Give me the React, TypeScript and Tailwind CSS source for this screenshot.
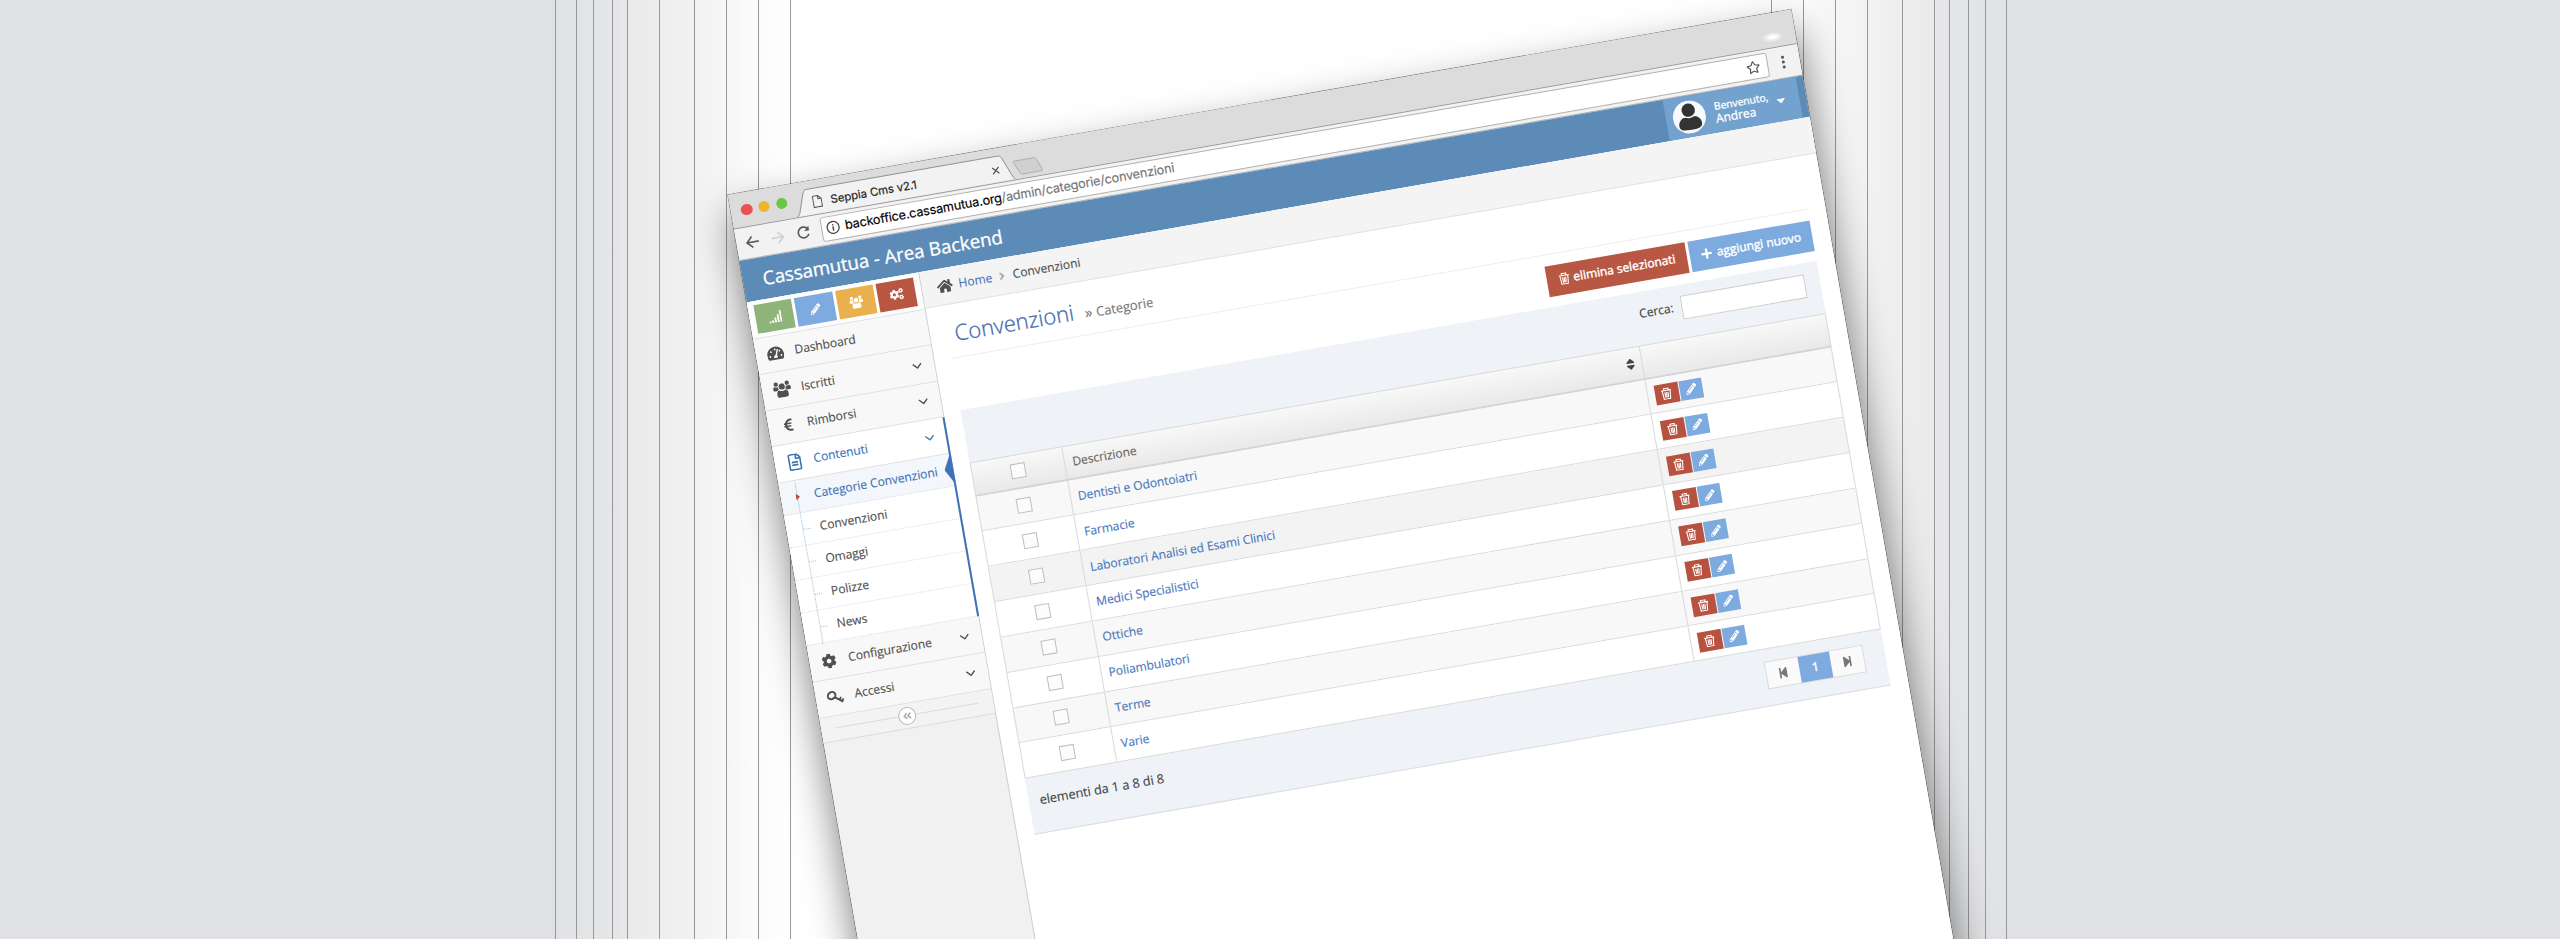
import React from 'react';
import {
  FaAngleDoubleLeft,
  FaAngleRight,
  FaCog,
  FaCogs,
  FaEuroSign,
  FaHome,
  FaPencilAlt,
  FaPlus,
  FaRegFileAlt,
  FaRegStar,
  FaSort,
  FaStepBackward,
  FaStepForward,
  FaTachometerAlt,
} from 'react-icons/fa';

const leftStripes = [
  'w-[21px] from-[#e0e2e5] to-[#e3e4e6]',
  'w-[17px] from-[#e1e3e5] to-[#e4e5e7]',
  'w-[19px] from-[#e2e4e6] to-[#e5e6e8]',
  'w-[15px] from-[#e4e5e7] to-[#e8e8ea]',
  'w-[32px] from-[#eaeaeb] to-[#eeeeee]',
  'w-[35px] from-[#eeeeee] to-[#f2f2f2]',
  'w-[32px] from-[#f2f2f2] to-[#f7f7f7]',
  'w-[32px] from-[#f6f6f6] to-[#fcfcfc]',
  'w-[32px] from-[#fbfbfb] to-[#ffffff]',
];

const rightStripes = [
  'w-[32px] from-[#ffffff] to-[#fbfbfb]',
  'w-[32px] from-[#fcfcfc] to-[#f6f6f6]',
  'w-[32px] from-[#f7f7f7] to-[#f2f2f2]',
  'w-[35px] from-[#f2f2f2] to-[#eeeeee]',
  'w-[32px] from-[#eeeeee] to-[#eaeaeb]',
  'w-[15px] from-[#e8e8ea] to-[#e4e5e7]',
  'w-[19px] from-[#e5e6e8] to-[#e2e4e6]',
  'w-[17px] from-[#e4e5e7] to-[#e1e3e5]',
  'w-[21px] from-[#e3e4e6] to-[#e0e2e5]',
];

const categories = [
  'Dentisti e Odontoiatri',
  'Farmacie',
  'Laboratori Analisi ed Esami Clinici',
  'Medici Specialistici',
  'Ottiche',
  'Poliambulatori',
  'Terme',
  'Varie',
];

const submenu = ['Categorie Convenzioni', 'Convenzioni', 'Omaggi', 'Polizze', 'News'];

interface IconProps {
  className: string;
}

const GroupIcon = ({ className }: IconProps) => (
  <svg className={className} viewBox="0 0 19 18" fill="currentColor">
    <circle cx="3.600" cy="3.200" r="2.300" />
    <circle cx="15.400" cy="3.200" r="2.300" />
    <circle cx="9.500" cy="6.200" r="3.300" />
    <path d="M0 8.500C0 6.500.8 5.600 2 5.600C3 6.300 4.200 6.300 5.200 5.900C5.200 7.500 5.600 8.500 6.300 9.200C5.200 9.300 4.500 9.800 4 10.300H1.500C.5 10.300 0 9.800 0 8.500Z" />
    <path d="M19 8.500C19 6.500 18.200 5.600 17 5.600C16 6.300 14.800 6.300 13.800 5.900C13.800 7.500 13.400 8.500 12.700 9.200C13.800 9.300 14.500 9.800 15 10.300H17.500C18.500 10.300 19 9.800 19 8.500Z" />
    <path d="M3.400 15.200C3.400 12 4.200 10 6.300 10C8.200 11.400 10.800 11.400 12.700 10C14.800 10 15.600 12 15.600 15.200C15.600 17 14.700 17.600 13.400 17.600H5.600C4.300 17.600 3.400 17 3.400 15.200Z" />
  </svg>
);

const KeyIcon = ({ className }: IconProps) => (
  <svg className={className} viewBox="0 0 17 14" fill="none" stroke="currentColor">
    <ellipse cx="5" cy="5" rx="4" ry="3.400" transform="rotate(-25 5 5)" strokeWidth="2" />
    <path d="M7.600 7 15.500 12.800" strokeWidth="2" />
    <path d="M12.300 10.300 14 7.900M14.600 12 16.300 9.700" strokeWidth="1.700" />
  </svg>
);

const TrashIcon = ({ className }: IconProps) => (
  <svg className={className} viewBox="0 0 11 12" fill="none" stroke="currentColor" strokeWidth="1.100">
    <path d="M.4 2.800H10.600M3.300 2.600V.7H7.700V2.600M1.500 3 2.300 11.400H8.700L9.500 3M3.900 4.600 4.200 9.900M5.500 4.600V9.900M7.100 4.600 6.800 9.900" />
  </svg>
);

const SignalIcon = ({ className }: IconProps) => (
  <svg className={className} viewBox="0 0 13 12" fill="currentColor">
    <path d="M0 10H1.800V12H0ZM2.800 9.200H4.600V12H2.800ZM5.600 7H7.400V12H5.600ZM8.400 4H10.200V12H8.400ZM11.200 0H13V12H11.200Z" />
  </svg>
);

const Chevron = ({ className }: IconProps) => (
  <svg className={className} viewBox="0 0 10 6" fill="none" stroke="currentColor" strokeWidth="1.400">
    <path d="M.8.8 5 5 9.200.8" />
  </svg>
);

const Backdrop = () => (
  <div className="flex h-full w-full">
    <div className="w-[555px] bg-[#dfe1e4]" />
    {leftStripes.map((stripe, index) => (
      <div key={index} className={`border-l border-[#98989a] bg-linear-to-r ${stripe}`} />
    ))}
    <div className="w-[981px] border-l border-[#98989a] bg-white" />
    {rightStripes.map((stripe, index) => (
      <div key={index} className={`border-l border-[#98989a] bg-linear-to-r ${stripe}`} />
    ))}
    <div className="flex-1 border-l border-[#98989a] bg-[#dfe1e4]" />
  </div>
);

const BrowserChrome = () => (
  <div className="font-['Inter',sans-serif]">
    <div className="flex h-[33.5px] bg-[#dcdcdc] pl-[10px]">
      <div className="flex gap-[6.3px] pt-[11.5px]">
        <span className="h-[11.6px] w-[11.6px] rounded-full bg-[#e8544d]" />
        <span className="h-[11.6px] w-[11.6px] rounded-full bg-[#efb42f]" />
        <span className="h-[11.6px] w-[11.6px] rounded-full bg-[#69c843]" />
      </div>
      <div className="relative ml-[7px] h-[34px] w-[222px]">
        <svg className="absolute inset-0 h-[34px] w-[222px]" viewBox="0 0 222 34">
          <path d="M0 33.8 C3 33 3.500 31 4.500 28 L10 11.500 C11 9 12 8 14 8 H208 C210 8 211 9 212 11 L219 29 C220 32 221 33 222 33.8" fill="#f2f2f2" stroke="#8e8e8e" strokeWidth="0.9" />
        </svg>
        <div className="relative flex h-full items-center pl-[18px] pt-[9px]">
          <svg className="h-[13px] w-[10px]" viewBox="0 0 10 13" fill="none" stroke="#555" strokeWidth="1">
            <path d="M.8.8H6L9.200 4V12.200H.8Z M6 .8V4H9.200" />
          </svg>
          <span className="ml-[8px] text-[11.300px] leading-4 text-[#222] [-webkit-text-stroke:0.2px]">Seppia Cms v2.1</span>
          <svg className="ml-auto mr-[14px] h-[8px] w-[8px]" viewBox="0 0 8 8" stroke="#555" strokeWidth="1.3">
            <path d="M.8.8 7.200 7.200M7.200.8.8 7.200" />
          </svg>
        </div>
      </div>
      <svg className="ml-[-1px] mt-[14.5px] h-[16px] w-[30px]" viewBox="0 0 30 16">
        <path d="M3 .8H22C24 .8 24.500 1.500 25 3L29 13C29.400 14.500 29 15 27.500 15H9C7.500 15 7 14.500 6.400 13L2 3C1.400 1.500 1.500.8 3 .8Z" fill="#d0d0d0" stroke="#ababab" strokeWidth="0.9" />
      </svg>
      <div className="ml-auto mr-[10px] mt-[18px] h-[12px] w-[26px] bg-radial from-white from-10% to-transparent to-60%" />
    </div>
    <div className="flex h-[33.5px] items-center border-t border-b border-t-[#999] border-b-[#b5b5b5] bg-[#f2f2f2]">
      <svg className="ml-[9px] h-[13px] w-[14px]" viewBox="0 0 14 13" fill="none" stroke="#5a5a5a" strokeWidth="1.6">
        <path d="M13.500 6.500H1.500M7 1 1.500 6.500 7 12" />
      </svg>
      <svg className="ml-[12px] h-[13px] w-[14px]" viewBox="0 0 14 13" fill="none" stroke="#d0d0d0" strokeWidth="1.6">
        <path d="M.5 6.500H12.500M7 1 12.500 6.500 7 12" />
      </svg>
      <svg className="ml-[12px] h-[14px] w-[14px]" viewBox="0 0 14 14" fill="none" stroke="#5a5a5a" strokeWidth="1.7">
        <path d="M12 9.200A5.400 5.400 0 1 1 11 3.200" />
        <path d="M12.800.8V5.700H7.900Z" fill="#5a5a5a" stroke="none" />
      </svg>
      <div className="ml-[11px] flex h-[25px] w-[961px] items-center rounded-[3px] border border-[#b0b0b0] bg-white pl-[4px]">
        <svg className="h-[14px] w-[14px]" viewBox="0 0 14 14" fill="none" stroke="#4a4a4a">
          <circle cx="7" cy="7" r="6" strokeWidth="1.3" />
          <path d="M7 6V10.300M7 3.600V5" strokeWidth="1.5" />
        </svg>
        <span className="ml-[5px] text-[12.700px] leading-4 tracking-[-0.15px] text-[#767676] [-webkit-text-stroke:0.15px]">
          <span className="text-black">backoffice.cassamutua.org</span>/admin/categorie/convenzioni
        </span>
        <FaRegStar className="ml-auto mr-[7px] h-[13px] w-[14px] text-[#555]" />
      </div>
      <div className="ml-[14px] flex flex-col gap-[2.500px]">
        <span className="h-[2.500px] w-[2.500px] rounded-full bg-[#555]" />
        <span className="h-[2.500px] w-[2.500px] rounded-full bg-[#555]" />
        <span className="h-[2.500px] w-[2.500px] rounded-full bg-[#555]" />
      </div>
    </div>
  </div>
);

const Navbar = () => (
  <div className="flex h-[42px] items-center bg-[#5d8bb7] text-white">
    <h1 className="ml-[20px] text-[18.7px] leading-none [-webkit-text-stroke:0.3px]">Cassamutua - Area Backend</h1>
    <div className="ml-auto mr-[7.500px] flex h-full w-[135px] items-center bg-[#74a2cf] [-webkit-text-stroke:0.3px]">
      <svg className="ml-[7px] h-[33px] w-[33px]" viewBox="0 0 33 33">
        <circle cx="16.500" cy="16.500" r="16.500" fill="#f7fafc" />
        <path d="M10 16.500C7 18 4.800 21 5 24.500C5.300 28 8 29.500 16.500 29.500S27.700 28 28 24.500C28.200 21 26 18 23 16.500Z" fill="#333" />
        <circle cx="16.500" cy="9.800" r="7.800" fill="#f7fafc" />
        <circle cx="16.500" cy="9.500" r="6.700" fill="#333" />
      </svg>
      <div className="ml-[10px]">
        <div className="text-[10.300px] leading-[12px]">Benvenuto,</div>
        <div className="text-[12px] leading-[13px]">Andrea</div>
      </div>
      <svg className="ml-[7.500px] h-[5px] w-[9px]" viewBox="0 0 9 5">
        <path d="M0 0H9L4.500 5Z" fill="#fff" />
      </svg>
    </div>
  </div>
);

interface MenuItemProps {
  icon: React.ReactNode;
  label: string;
  arrow?: boolean;
  active?: boolean;
}

const MenuItem = ({ icon, label, arrow = true, active = false }: MenuItemProps) => (
  <div
    className={`flex h-[36.600px] items-center border-b border-[#dedede] ${
      active ? 'bg-white text-[#3b74b9]' : 'bg-[#f8f8f8] text-[#505050]'
    }`}
  >
    <span className="ml-[10px] flex w-[19px] justify-center">{icon}</span>
    <span className="ml-[10px] leading-4">{label}</span>
    {arrow && <Chevron className="ml-auto mr-[12px] h-[6px] w-[10px]" />}
  </div>
);

const Sidebar = () => (
  <div className="relative w-[175px] border-r border-[#cfcfcf] bg-[#f1f1f1]">
    <div className="flex h-[37.500px] items-center gap-[3px] border-b border-[#dedede] bg-[#fdfdfd] pl-[6px] text-white">
      <span className="flex h-[28.500px] w-[38.300px] items-center justify-center bg-[#8eb479]">
        <SignalIcon className="mt-[2px] h-[12px] w-[13px]" />
      </span>
      <span className="flex h-[28.500px] w-[38.300px] items-center justify-center bg-[#7eabdf]">
        <FaPencilAlt className="h-[11px] w-[11px]" />
      </span>
      <span className="flex h-[28.500px] w-[38.300px] items-center justify-center bg-[#eab04e]">
        <GroupIcon className="h-[13px] w-[14px]" />
      </span>
      <span className="flex h-[28.500px] w-[38.300px] items-center justify-center bg-[#b85642]">
        <FaCogs className="h-[14px] w-[14px]" />
      </span>
    </div>
    <MenuItem icon={<FaTachometerAlt className="h-[16px] w-[17px]" />} label="Dashboard" arrow={false} />
    <MenuItem icon={<GroupIcon className="h-[17px] w-[18px]" />} label="Iscritti" />
    <MenuItem icon={<FaEuroSign className="h-[14px] w-[12px]" />} label="Rimborsi" />
    <MenuItem icon={<FaRegFileAlt className="h-[17px] w-[14px]" />} label="Contenuti" active />
    <div className="relative">
      {submenu.map((label, index) => (
        <div
          key={label}
          className={`flex h-[33.100px] items-center border-b border-dotted border-[#dcdcdc] ${
            index === 0 ? 'bg-[#f3f6fb] text-[#4173b8]' : 'bg-white text-[#505050]'
          }`}
        >
          <span className="ml-[17px] w-[7px]">
            {index > 0 && <span className="block border-t border-dotted border-[#9dbdd6]" />}
          </span>
          <span className="ml-[9.500px] leading-4">{label}</span>
        </div>
      ))}
      <span className="absolute left-[16px] top-[2px] bottom-0 border-l border-dotted border-[#9dbdd6]" />
      <svg className="absolute left-[15px] top-[13.500px] h-[7px] w-[4px]" viewBox="0 0 4 7">
        <path d="M0 0 4 3.500 0 7Z" fill="#c4472c" />
      </svg>
      <svg className="absolute right-0 top-0 h-[30px] w-[8px]" viewBox="0 0 8 30">
        <path d="M8 0V30L0 15.500Z" fill="#3f73b5" />
      </svg>
      <span className="absolute right-[-1px] top-[-36.600px] bottom-0 w-[2px] bg-[#3f73b5]" />
    </div>
    <MenuItem icon={<FaCog className="h-[15px] w-[15px]" />} label="Configurazione" />
    <MenuItem icon={<KeyIcon className="h-[14px] w-[17px]" />} label="Accessi" />
    <div className="flex h-[25px] items-center border-b border-[#dcdcdc] bg-[#f3f3f3] px-[14px]">
      <span className="flex-1 border-t border-[#dadada]" />
      <span className="flex h-[18px] w-[18px] items-center justify-center rounded-full border border-[#bbb] bg-white text-[#aaa]">
        <FaAngleDoubleLeft className="h-[10px] w-[10px]" />
      </span>
      <span className="flex-1 border-t border-[#dadada]" />
    </div>
  </div>
);

const Checkbox = () => <span className="h-[15px] w-[15px] border border-[#bdbdbd] bg-[#fcfcfc]" />;

const CategoryTable = () => (
  <div className="border-b border-[#d9dde3] bg-[#eff2f7]">
    <div className="flex h-[53.500px] items-start justify-end pr-[15px] pt-[11.500px]">
      <span className="mt-[3px] mr-[8px] leading-[16px] text-[#444]">Cerca:</span>
      <span className="h-[23.500px] w-[126px] border border-[#cdcdcd] bg-white" />
    </div>
    <div className="flex h-[34.500px] border-t border-b-2 border-t-[#dadada] border-b-[#d4d4d4] bg-linear-to-b from-[#f8f8f8] to-[#e9e9e9] text-[#666]">
      <div className="flex w-[93.500px] items-center justify-center border-r border-l border-[#d9d9d9]">
        <Checkbox />
      </div>
      <div className="flex w-[586.500px] items-center border-r border-[#d9d9d9] pl-[8px]">
        Descrizione
        <FaSort className="ml-auto mr-[5px] h-[14px] w-[12px] text-[#444]" />
      </div>
      <div className="flex-1 border-r border-[#d9d9d9]" />
    </div>
    {categories.map((name, index) => (
      <div
        key={name}
        className={`flex h-[35.850px] border-b border-[#d9d9d9] ${
          index === 2 ? 'bg-[#f3f3f3]' : index % 2 === 0 ? 'bg-[#f8f8f8]' : 'bg-white'
        }`}
      >
        <div className="flex w-[93.500px] items-center justify-center border-r border-l border-[#d9d9d9]">
          <Checkbox />
        </div>
        <div className="flex w-[586.500px] items-center border-r border-[#d9d9d9] pl-[7.500px] text-[#4a77bd]">{name}</div>
        <div className="flex flex-1 items-center gap-[0.800px] border-r border-[#d9d9d9] pl-[7px] text-white">
          <span className="flex h-[20px] w-[23.800px] items-center justify-center bg-[#b85240]">
            <TrashIcon className="h-[12px] w-[11px]" />
          </span>
          <span className="flex h-[20px] w-[23.800px] items-center justify-center bg-[#7eabdf]">
            <FaPencilAlt className="h-[11px] w-[11px]" />
          </span>
        </div>
      </div>
    ))}
    <div className="flex h-[56px] justify-between pr-[21px] pl-[11px]">
      <span className="pt-[15px] text-[12.700px] leading-[16px] text-[#444]">elementi da 1 a 8 di 8</span>
      <div className="mt-[11.500px] flex h-[28.500px] w-[100px] border border-[#d9d9d9] bg-[#fafafa] text-[#777]">
        <span className="flex flex-1 items-center justify-center">
          <FaStepBackward className="h-[12px] w-[11px]" />
        </span>
        <span className="flex flex-1 items-center justify-center bg-[#7eabdf] text-white [-webkit-text-stroke:0.4px]">1</span>
        <span className="flex flex-1 items-center justify-center">
          <FaStepForward className="h-[12px] w-[11px]" />
        </span>
      </div>
    </div>
  </div>
);

const Content = () => (
  <div className="flex-1 bg-white">
    <div className="flex h-[37px] items-center border-b border-[#e2e2e2] bg-[#f4f4f4] pl-[15px] text-[#505050]">
      <FaHome className="h-[16px] w-[16px]" />
      <span className="ml-[6px] leading-4 text-[#4a77bd]">Home</span>
      <FaAngleRight className="mx-[4.500px] h-[12px] w-[12px] text-[#aaa]" />
      <span className="leading-4">Convenzioni</span>
    </div>
    <div className="pr-[18px] pl-[17px]">
      <div className="flex h-[54px] items-baseline border-b border-dotted border-[#dcdcdc] pt-[13px]">
        <h2 className="ml-[7.500px] text-[22px] leading-[30px] font-light text-[#3f6cb0] [-webkit-text-stroke:0.3px]">
          Convenzioni
        </h2>
        <span className="ml-[11px] text-[12.900px] leading-[18px] text-[#777]">
          <span className="mr-[4px] text-[15px]">»</span>
          Categorie
        </span>
      </div>
      <div className="mt-[11px] mb-[10px] flex justify-end gap-[3px] leading-4 text-white [-webkit-text-stroke:0.4px]">
        <span className="flex h-[30.500px] w-[142px] items-center justify-center bg-[#b85743]">
          <TrashIcon className="mr-[4px] h-[12px] w-[11px]" />
          elimina selezionati
        </span>
        <span className="flex h-[30.500px] w-[124px] items-center justify-center bg-[#7eabdf]">
          <FaPlus className="mr-[4px] h-[12px] w-[12px]" />
          aggiungi nuovo
        </span>
      </div>
      <CategoryTable />
    </div>
  </div>
);

const App = () => {
  return (
    <div className="relative h-[939px] w-[2560px] overflow-hidden">
      <Backdrop />
      <div className="absolute left-[728px] top-[195px] h-[1150px] w-[1079px] origin-top-left rotate-[-9.900deg] bg-white shadow-[0_0_0_0.600px_rgba(0,0,0,0.5),0_20px_42px_rgba(0,0,0,0.55)]">
        <div className="flex h-full flex-col font-['Open_Sans',sans-serif] text-[12px] [-webkit-text-stroke:0.15px]">
          <BrowserChrome />
          <Navbar />
          <div className="flex flex-1">
            <Sidebar />
            <Content />
          </div>
        </div>
      </div>
    </div>
  );
};

export default App;
